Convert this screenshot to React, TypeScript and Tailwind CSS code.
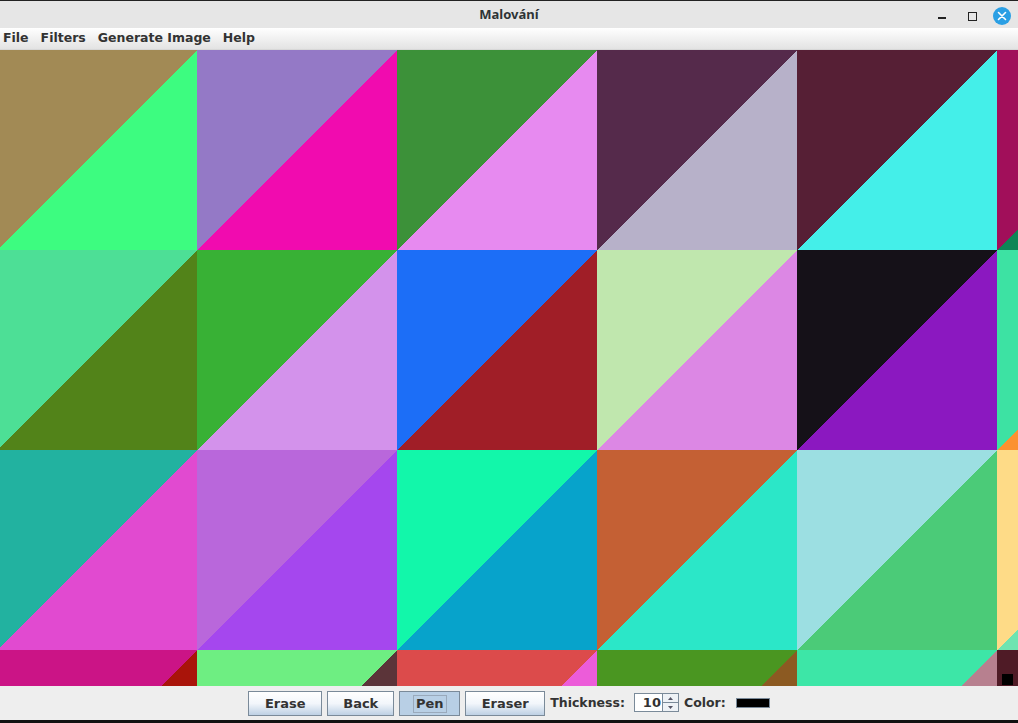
import React from 'react'

const TILES: string[][][] = [
  [['#a28a55', '#3dfc80'], ['#9479c6', '#f10baf'], ['#3c9139', '#e78af0'], ['#552a4b', '#b7b1c9'], ['#561f35', '#44efe9'], ['#a10f5a', '#0d8656']],
  [['#4ddf96', '#528319'], ['#38b135', '#d392eb'], ['#1c6ef7', '#a01e27'], ['#c0e7ae', '#dc87e4'], ['#151118', '#8b18c0'], ['#3de2a3', '#fb9130']],
  [['#22b2a0', '#e14ad0'], ['#b967db', '#a547ee'], ['#12f7aa', '#07a3cb'], ['#c46034', '#2be7c8'], ['#9cdfe2', '#4bcb78'], ['#fedb87', '#6ee4b1']],
  [['#cb1486', '#a9140a'], ['#6eee82', '#5b3439'], ['#dc4b4b', '#ec5cd9'], ['#4a9621', '#8c5a22'], ['#3de6a7', '#b7808f'], ['#4f1b26', '#4f1b26']],
]

const FONT = "font-['DejaVu_Sans',sans-serif]"

function Canvas() {
  return (
    <svg width="1018" height="636" className="block shrink-0" shapeRendering="crispEdges">
      {TILES.map((row, r) =>
        row.map(([a, b], c) => {
          const x = -3 + c * 200
          const y = r * 200
          return (
            <g key={`${r}-${c}`}>
              <polygon points={`${x},${y} ${x + 200},${y} ${x},${y + 200}`} fill={a} />
              <polygon points={`${x + 200},${y} ${x + 200},${y + 200} ${x},${y + 200}`} fill={b} />
            </g>
          )
        })
      )}
      <rect x="1002" y="624" width="11" height="11" fill="#000" />
    </svg>
  )
}

function Btn({ label, w, active }: { label: string; w: string; active?: boolean }) {
  return (
    <div
      className={`${w} h-[25px] flex items-center justify-center border border-[#7a8a99] text-[13px] ${
        active ? 'bg-[#b8cfe5]' : 'bg-gradient-to-b from-white via-[#f2f6fb] to-[#bdd0e4]'
      }`}
    >
      {active ? (
        <span className="border border-[#99a9bb] px-[2px] leading-[16px]">{label}</span>
      ) : (
        label
      )}
    </div>
  )
}

export default function App() {
  return (
    <div className={`w-[1018px] h-[723px] flex flex-col overflow-hidden bg-[#eeeeee] ${FONT}`}>
      {/* title bar */}
      <div className="relative h-[28px] shrink-0 bg-[#e6e6e6] border-t border-[#222] flex items-center justify-center">
        <span className="text-[13px] font-bold text-[#2e3436] font-['Noto_Sans',sans-serif]">Malování</span>
        <div className="absolute right-[7px] top-[5px] flex items-center">
          <div className="w-[30px] h-[20px] flex items-center justify-center">
            <div className="w-[8px] h-[2px] bg-[#222] mt-[4px]" />
          </div>
          <div className="w-[30px] h-[20px] flex items-center justify-center">
            <div className="w-[9px] h-[9px] border-[1.5px] border-[#222]" />
          </div>
          <div className="w-[18px] h-[18px] ml-[6px] rounded-full bg-[#2a9fe4] flex items-center justify-center">
            <svg width="10" height="10" viewBox="0 0 10 10">
              <path d="M1.5 1.5 L8.5 8.5 M8.5 1.5 L1.5 8.5" stroke="#fff" strokeWidth="1.6" strokeLinecap="round" />
            </svg>
          </div>
        </div>
      </div>

      {/* menu bar */}
      <div className="h-[22px] shrink-0 flex items-center pl-[3px] gap-[12px] bg-gradient-to-b from-white to-[#e3e3e3] border-b border-[#d8d8d8] text-[12.5px] font-bold text-[#333]">
        <span>File</span>
        <span>Filters</span>
        <span>Generate Image</span>
        <span>Help</span>
      </div>

      <Canvas />

      {/* toolbar */}
      <div className="flex-1 flex items-start justify-center gap-[5px] pt-[5px] bg-[#eeeeee] border-b-[3px] border-[#111] text-[12.5px] font-bold text-[#333]">
        <Btn label="Erase" w="w-[74px]" />
        <Btn label="Back" w="w-[67px]" />
        <Btn label="Pen" w="w-[61px]" active />
        <Btn label="Eraser" w="w-[80px]" />
        <span className="h-[25px] flex items-center text-[12.5px]">Thickness:</span>
        <div className="ml-[4px] mt-[2px] h-[19px] flex border border-[#7a8a99] bg-white">
          <div className="w-[27px] text-right pr-[1px] leading-[17px] text-[13px]">10</div>
          <div className="w-[16px] flex flex-col border-l border-[#7a8a99] bg-[#eef2f6]">
            <div className="flex-1 flex items-center justify-center border-b border-[#7a8a99]">
              <svg width="5" height="3" viewBox="0 0 5 3"><path d="M0 3 L2.5 0 L5 3Z" fill="#556" /></svg>
            </div>
            <div className="flex-1 flex items-center justify-center">
              <svg width="5" height="3" viewBox="0 0 5 3"><path d="M0 0 L2.5 3 L5 0Z" fill="#556" /></svg>
            </div>
          </div>
        </div>
        <span className="h-[25px] flex items-center">Color:</span>
        <div className="ml-[5px] mt-[7px] w-[34px] h-[10px] bg-black border border-[#7a8a99]" />
      </div>
    </div>
  )
}
